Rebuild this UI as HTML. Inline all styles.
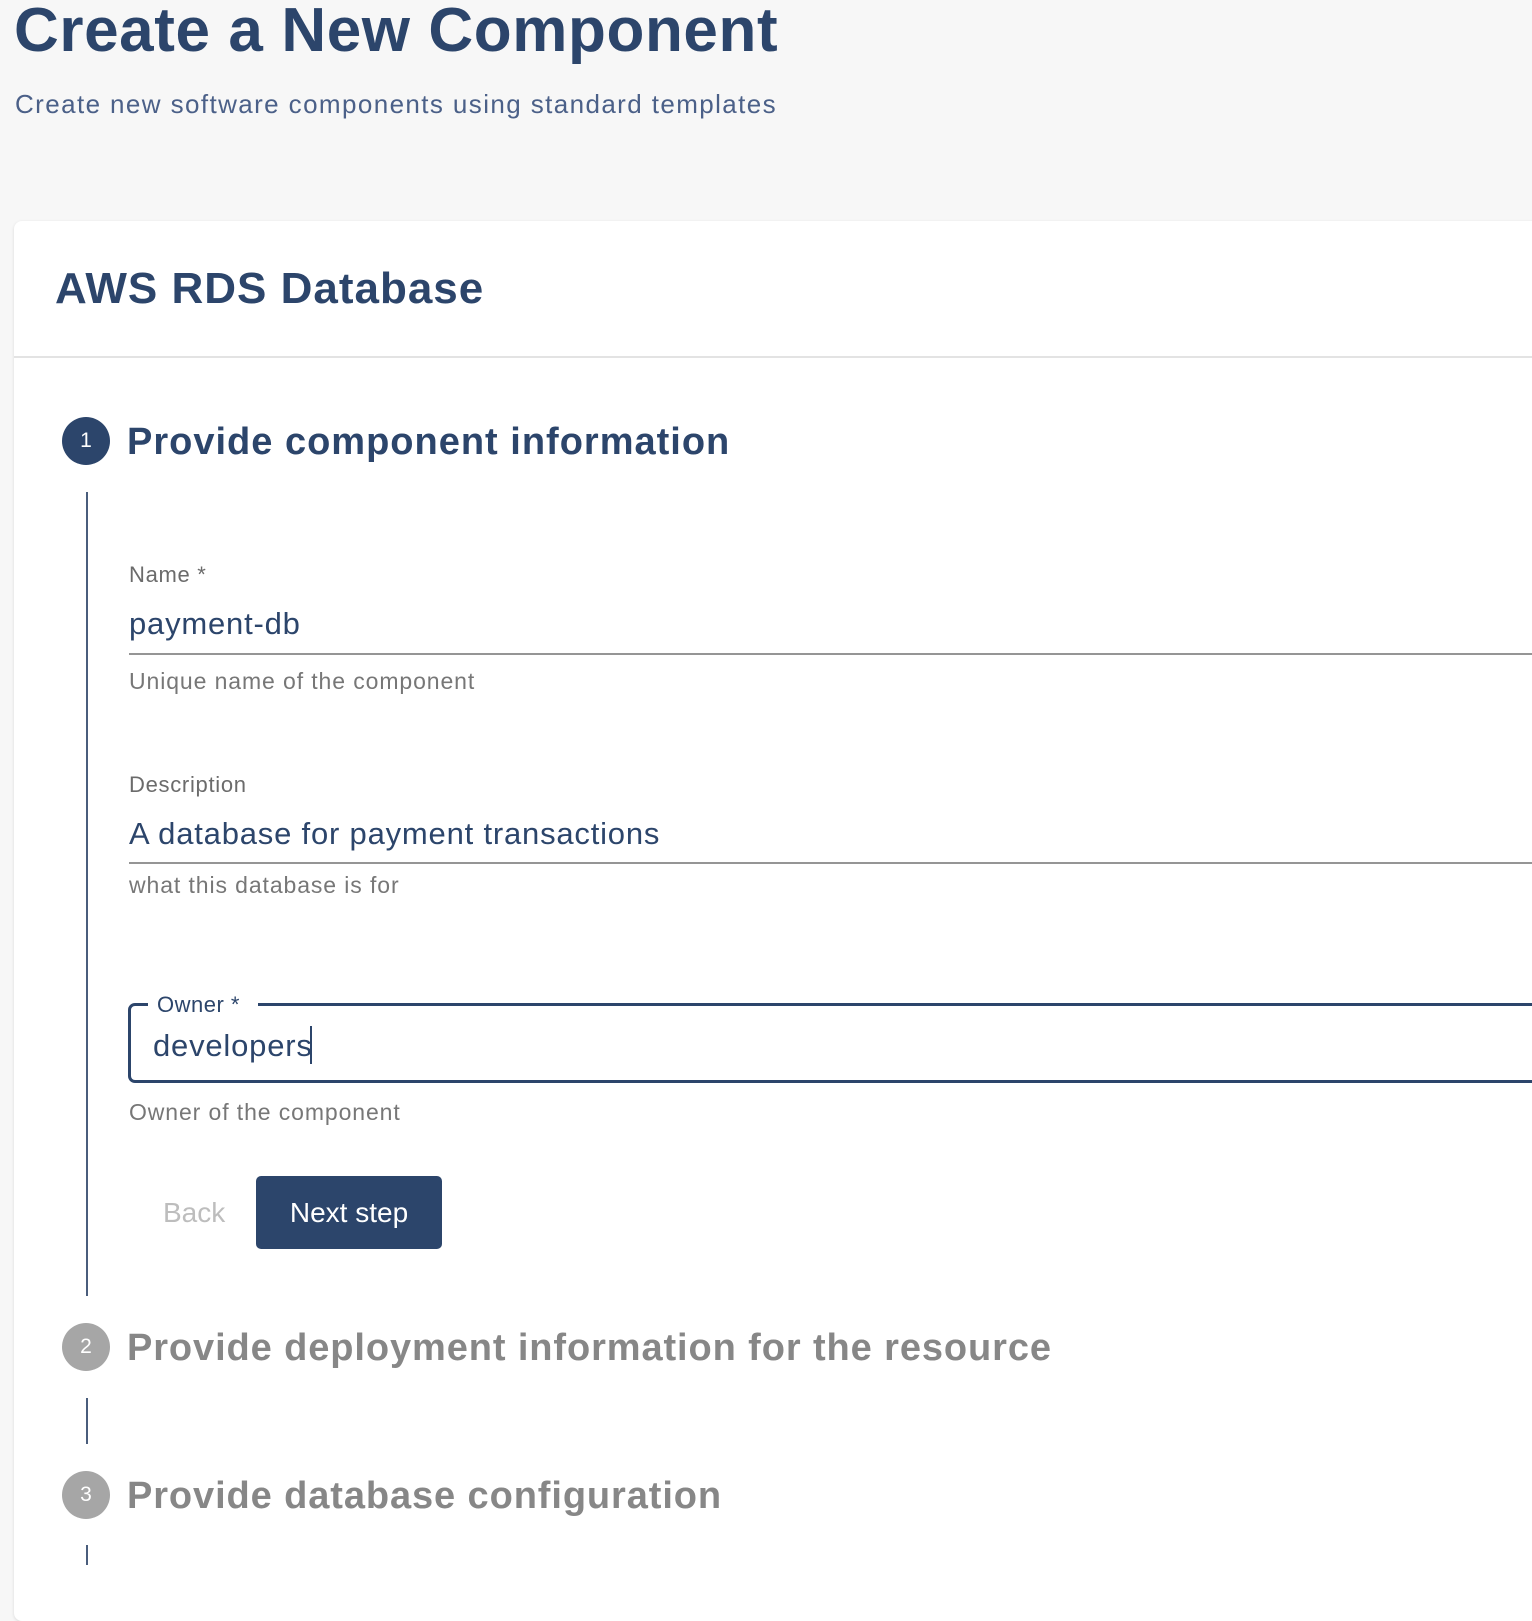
<!DOCTYPE html>
<html><head><meta charset="utf-8"><style>
html,body{margin:0;padding:0;}
body{width:1532px;height:1558px;background:#f7f7f7;position:relative;overflow:hidden;font-family:"Liberation Sans",sans-serif;}
.t{position:absolute;white-space:nowrap;line-height:1;}
.card{position:absolute;left:14px;top:221px;width:1540px;height:1400px;background:#fff;border-radius:8px;box-shadow:0 1px 3px rgba(0,0,0,.12);}
.div{position:absolute;left:14px;top:356px;width:1530px;height:2px;background:#e3e3e3;}
.navy{color:#2c456b;}
.lbl{font-size:22px;color:#6b6b6b;letter-spacing:0.7px;}
.help{font-size:23px;color:#777;letter-spacing:0.9px;}
.val{font-size:31px;color:#2c456b;letter-spacing:0.8px;}
.circ{position:absolute;width:48px;height:48px;border-radius:50%;color:#fff;font-size:21px;line-height:48px;text-align:center;}
.vl{position:absolute;left:86px;width:2px;background:#4a5d7c;}
.ul{position:absolute;left:129px;width:1420px;height:2px;background:#959595;}
.hd{font-size:38px;font-weight:bold;letter-spacing:1px;}
</style></head><body>
<div class="t navy" style="left:14px;top:0px;font-size:62px;font-weight:bold;letter-spacing:0.6px;">Create a New Component</div>
<div class="t" style="left:15px;top:91px;font-size:26px;color:#4b6088;letter-spacing:1.4px;">Create new software components using standard templates</div>
<div class="card"></div>
<div class="div"></div>
<div class="t navy" style="left:55px;top:267px;font-size:44px;font-weight:bold;letter-spacing:1px;">AWS RDS Database</div>

<div class="circ" style="left:62px;top:417px;background:#2c456b;">1</div>
<div class="t navy hd" style="left:127px;top:423px;">Provide component information</div>
<div class="vl" style="top:492px;height:804px;"></div>

<div class="t lbl" style="left:129px;top:564px;">Name *</div>
<div class="t val" style="left:129px;top:608px;">payment-db</div>
<div class="ul" style="top:653px;"></div>
<div class="t help" style="left:129px;top:670px;">Unique name of the component</div>

<div class="t lbl" style="left:129px;top:774px;">Description</div>
<div class="t val" style="left:129px;top:818px;">A database for payment transactions</div>
<div class="ul" style="top:862px;"></div>
<div class="t help" style="left:129px;top:874px;">what this database is for</div>

<div style="position:absolute;left:128px;top:1003px;width:1420px;height:74px;border:3px solid #2c456b;border-radius:7px;"></div>
<div style="position:absolute;left:148px;top:995px;width:110px;height:16px;background:#fff;"></div>
<div class="t" style="left:157px;top:994px;font-size:22px;color:#2c456b;letter-spacing:0.5px;">Owner *</div>
<div class="t val" style="left:153px;top:1030px;">developers</div>
<div style="position:absolute;left:310px;top:1026px;width:2px;height:38px;background:#2c456b;"></div>
<div class="t help" style="left:129px;top:1101px;">Owner of the component</div>

<div class="t" style="left:163px;top:1199px;font-size:28px;color:#bdbdbd;">Back</div>
<div style="position:absolute;left:256px;top:1176px;width:186px;height:73px;background:#2c456b;border-radius:5px;color:#fff;font-size:28px;line-height:73px;text-align:center;">Next step</div>

<div class="circ" style="left:62px;top:1323px;background:#a6a6a6;">2</div>
<div class="t hd" style="left:127px;top:1329px;color:#878787;letter-spacing:0.9px;">Provide deployment information for the resource</div>
<div class="vl" style="top:1398px;height:46px;"></div>

<div class="circ" style="left:62px;top:1471px;background:#a6a6a6;">3</div>
<div class="t hd" style="left:127px;top:1477px;color:#878787;letter-spacing:0.9px;">Provide database configuration</div>
<div class="vl" style="top:1545px;height:20px;"></div>
</body></html>
